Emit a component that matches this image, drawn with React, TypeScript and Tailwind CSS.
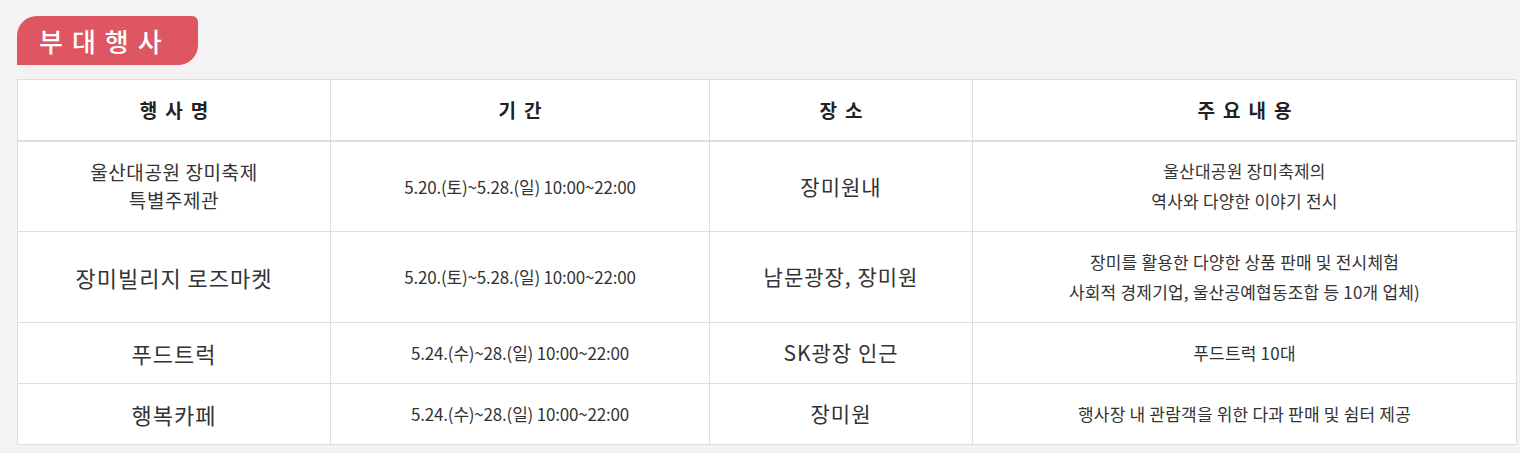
const rows = [
  {
    name: ['울산대공원 장미축제', '특별주제관'],
    nameSize: 'text-[19px] leading-[28px] tracking-[0.6px]',
    period: '5.20.(토)~5.28.(일) 10:00~22:00',
    place: '장미원내',
    desc: ['울산대공원 장미축제의', '역사와 다양한 이야기 전시'],
    h: 'h-[91px]',
  },
  {
    name: ['장미빌리지 로즈마켓'],
    nameSize: 'text-[22px] tracking-[1px]',
    period: '5.20.(토)~5.28.(일) 10:00~22:00',
    place: '남문광장, 장미원',
    desc: ['장미를 활용한 다양한 상품 판매 및 전시체험', '사회적 경제기업, 울산공예협동조합 등 10개 업체)'],
    h: 'h-[91px]',
  },
  {
    name: ['푸드트럭'],
    nameSize: 'text-[22px] tracking-[1px]',
    period: '5.24.(수)~28.(일) 10:00~22:00',
    place: 'SK광장 인근',
    desc: ['푸드트럭 10대'],
    h: 'h-[61px]',
  },
  {
    name: ['행복카페'],
    nameSize: 'text-[22px] tracking-[1px]',
    period: '5.24.(수)~28.(일) 10:00~22:00',
    place: '장미원',
    desc: ['행사장 내 관람객을 위한 다과 판매 및 쉼터 제공'],
    h: 'h-[61px]',
  },
]

const App = () => {
  return (
    <div className="min-h-[453px] w-[1520px] bg-[#f4f2f3] pl-[17px] pt-[16px] font-['Noto_Sans_CJK_KR','Noto_Sans',sans-serif] text-[#333]">
      <div className="flex h-[49px] w-[181px] items-center rounded-tl-[20px] rounded-tr-[6px] rounded-br-[20px] bg-[#de5662] pl-[22px] text-[26px] font-medium tracking-[9px] text-white">
        부대행사
      </div>

      <table className="mt-[14px] w-[1500px] table-fixed border-collapse bg-white">
        <colgroup>
          <col className="w-[313px]" />
          <col className="w-[379px]" />
          <col className="w-[263px]" />
          <col />
        </colgroup>
        <thead>
          <tr className="h-[61px] border-b-2 border-[#dcdee2]">
            {['행사명', '기간', '장소', '주요내용'].map((t) => (
              <th key={t} className="border border-[#dcdee2] pl-[8px] text-center text-[19px] font-bold tracking-[8px] text-[#222]">
                {t}
              </th>
            ))}
          </tr>
        </thead>
        <tbody>
          {rows.map((r, i) => (
            <tr key={i} className={r.h}>
              <td className={`border border-[#dcdee2] text-center ${r.nameSize}`}>
                {r.name.map((l) => (
                  <div key={l}>{l}</div>
                ))}
              </td>
              <td className="border border-[#dcdee2] text-center text-[17px] tracking-[-0.2px]">{r.period}</td>
              <td className="border border-[#dcdee2] text-center text-[21px] tracking-[1px]">{r.place}</td>
              <td className="border border-[#dcdee2] text-center text-[17px] leading-[30px] tracking-[0.2px]">
                {r.desc.map((l) => (
                  <div key={l}>{l}</div>
                ))}
              </td>
            </tr>
          ))}
        </tbody>
      </table>
    </div>
  )
}

export default App
